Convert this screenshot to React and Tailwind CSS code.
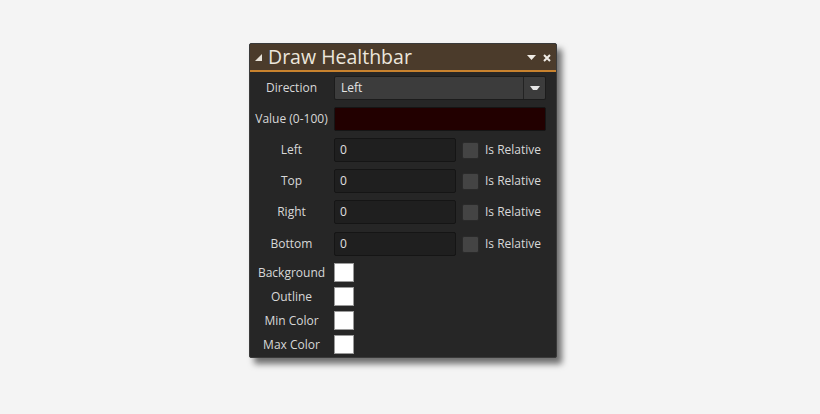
import React from "react";

const font = { fontFamily: '"Open Sans", "Noto Sans", sans-serif' };

function Label({ children }) {
  return (
    <div className="w-[83px] shrink-0 text-center text-[12px] text-[#d8d8d8]">{children}</div>
  );
}

function CoordRow({ label, extra = "" }) {
  return (
    <div className={"flex h-[24px] items-center " + extra}>
      <Label>{label}</Label>
      <div className="ml-[1px] flex h-[24px] w-[122px] items-center rounded-[2px] border border-[#151515] bg-[#1f1f1f] pl-[5px] text-[12px] text-[#e0e0e0]">
        0
      </div>
      <div className="ml-[6px] h-[17px] w-[17px] rounded-[2px] border border-[#2a2a2a] bg-[#444444]" />
      <div className="ml-[6px] text-[12px] text-[#d8d8d8]">Is Relative</div>
    </div>
  );
}

function SwatchRow({ label }) {
  return (
    <div className="flex h-[19px] items-center">
      <Label>{label}</Label>
      <div className="ml-[1px] h-[19px] w-[20px] border border-[#9a9a9a] bg-white" />
    </div>
  );
}

export default function App() {
  return (
    <div className="h-[414px] w-[820px] bg-[#f4f4f4] pl-[249px] pt-[43px]" style={font}>
      <div className="flex h-[315px] w-[308px] flex-col overflow-hidden rounded-[2px] border border-[#3a3a3a] bg-[#262626] shadow-[5px_6px_6px_rgba(0,0,0,0.55)]">
        <div className="flex h-[26px] items-center bg-[#4b3b2b] pl-[5px] pr-[5px]">
          <svg width="8" height="8" viewBox="0 0 8 8" className="mt-[2px]">
            <polygon points="7,0 7,7 0,7" fill="#e8e2d8" />
          </svg>
          <div className="ml-[5px] text-[19.5px] leading-none text-[#ece6dc]">Draw Healthbar</div>
          <div className="flex-1" />
          <svg width="9" height="6" viewBox="0 0 9 6" className="mt-[2px]">
            <polygon points="0,0 9,0 4.5,5" fill="#f0ece6" />
          </svg>
          <svg width="8" height="8" viewBox="0 0 8 8" className="ml-[7px] mt-[1px]">
            <path d="M1 1 L7 7 M7 1 L1 7" stroke="#f0ece6" strokeWidth="2" />
          </svg>
        </div>
        <div className="h-[2px] bg-[#c8822e]" />
        <div className="flex flex-col gap-[7px] pt-[4px]">
          <div className="flex h-[24px] items-center">
            <Label>Direction</Label>
            <div className="ml-[1px] flex h-[24px] w-[212px] items-stretch rounded-[2px] border border-[#1c1c1c] bg-[#3c3c3c]">
              <div className="flex flex-1 items-center pl-[6px] text-[12px] text-[#e4e4e4]">Left</div>
              <div className="flex w-[22px] items-center justify-center border-l border-[#232323]">
                <svg width="10" height="5" viewBox="0 0 10 5">
                  <polygon points="0,0 10,0 7,4 3,4" fill="#e6e6e6" />
                </svg>
              </div>
            </div>
          </div>
          <div className="flex h-[24px] items-center">
            <Label>Value (0-100)</Label>
            <div className="ml-[1px] h-[24px] w-[212px] rounded-[2px] border border-[#151515] bg-[#220000]" />
          </div>
          <CoordRow label="Left" />
          <CoordRow label="Top" />
          <CoordRow label="Right" />
          <CoordRow label="Bottom" extra="mt-[1px]" />
        </div>
        <div className="mt-[7px] flex flex-col gap-[5px]">
          <SwatchRow label="Background" />
          <SwatchRow label="Outline" />
          <SwatchRow label="Min Color" />
          <SwatchRow label="Max Color" />
        </div>
      </div>
    </div>
  );
}
